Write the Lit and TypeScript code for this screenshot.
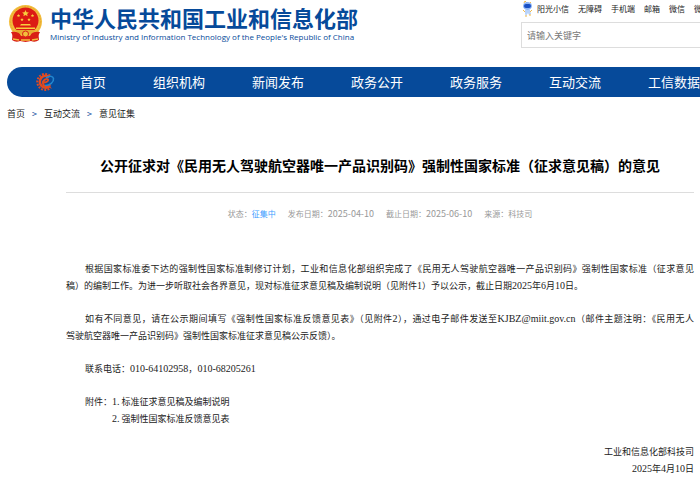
import { LitElement, html, css } from "lit";
import { customElement } from "lit/decorators.js";

const SANS = css`"Noto Sans CJK SC", "Noto Sans", sans-serif`;

@customElement("site-header")
class SiteHeader extends LitElement {
  static styles = css`
    :host { display: block; font-family: ${SANS}; }
    header { display: flex; height: 60px; }
    .brand { flex: 1; min-width: 0; display: flex; align-items: flex-start; padding: 4px 0 0 8px; gap: 7px; white-space: nowrap; }
    .emblem { flex: none; width: 35px; height: 39px; }
    .name { margin: 0; font-size: 22px; line-height: 26px; font-weight: 700; color: #064a9a; }
    .english { margin: 0; font: 400 8px/14px "Open Sans", sans-serif; color: #064a9a; }
    .tools { flex: none; width: 179px; overflow: hidden; white-space: nowrap; }
    .links { display: flex; align-items: center; gap: 9px; height: 18px; padding-left: 1px; }
    .links a { display: flex; align-items: center; gap: 4px; color: #222; text-decoration: none; font-size: 8px; line-height: 16px; }
    .mascot { width: 11px; height: 16px; }
    input { display: block; box-sizing: border-box; width: 240px; height: 26px; margin-top: 4px; padding: 0 5px; border: 1px solid #ddd; background: #fff; font: 9px/16px ${SANS}; color: #333; }
    input::placeholder { color: #777; opacity: 1; }
  `;
  render() {
    return html`
      <header>
        <div class="brand">
          <svg class="emblem" viewBox="0 0 35 39" aria-hidden="true">
            <path d="M5 25 L4 36 Q8 39 12 37 L17.500 38 L23 37 Q27 39 31 36 L30 25Z" fill="#d91f16" />
            <circle cx="17.500" cy="17.500" r="16.500" fill="#f3bd3c" />
            <circle cx="17.500" cy="17.500" r="15" fill="none" stroke="#e5a730" stroke-width="1" stroke-dasharray="2 1" />
            <circle cx="17.500" cy="16.500" r="13" fill="#dc1b14" />
            <path d="M17.500 6l1 2.200 2.400.2-1.800 1.600.5 2.300-2.100-1.200-2.100 1.200.5-2.300-1.800-1.600 2.400-.2z" fill="#f8cf3d" />
            <g fill="#f8cf3d">
              <path d="M10.500 10l.5 1 1.100.1-.8.8.2 1.100-1-.6-1 .6.2-1.100-.8-.8 1.100-.1z" />
              <path d="M24.500 10l.5 1 1.100.1-.8.8.2 1.100-1-.6-1 .6.2-1.100-.8-.8 1.100-.1z" />
              <path d="M14 14l.5 1 1.100.1-.8.8.2 1.100-1-.6-1 .6.2-1.100-.8-.8 1.100-.1z" />
              <path d="M21 14l.5 1 1.100.1-.8.8.2 1.100-1-.6-1 .6.2-1.100-.8-.8 1.100-.1z" />
              <path d="M13 20h9l1 1.500h-11zM8 23.500h19v1.500h-19z" />
            </g>
            <path d="M7 26h21l-4 4h-13z" fill="#e8ab32" />
            <path d="M3 28q8-1 10 4h9q2-5 10-4l-2 4q-5-1-6 3l-6.500 2-6.500-2q-1-4-6-3z" fill="#d91f16" />
            <circle cx="17.500" cy="30" r="3" fill="#f3bd3c" stroke="#d91f16" />
            <path d="M5 35l6 1M30 35l-6 1M13 36h9" stroke="#f3bd3c" stroke-width="1.500" />
          </svg>
          <div>
            <h1 class="name">中华人民共和国工业和信息化部</h1>
            <p class="english">Ministry of Industry and Information Technology of the People's Republic of China</p>
          </div>
        </div>
        <div class="tools">
          <nav class="links" aria-label="快捷入口">
            <a href="#">
              <svg class="mascot" viewBox="0 0 11 16" aria-hidden="true">
                <path d="M2 2l1-2 2 2M8 2l1-1" fill="none" stroke="#efb94b" />
                <ellipse cx="5.500" cy="5" rx="4.500" ry="4" fill="#8fb5f4" />
                <rect x="2" y="3" width="7" height="4" rx="2" fill="#194fc4" />
                <path d="M3 9h5l1 4-2 1-1-2-2 3-1-2z" fill="#b9d3fa" />
                <path d="M1 9l2 2M10 9l-2 2M3 15h2M7 14h2" stroke="#efb94b" />
              </svg>阳光小信</a>
            <a href="#">无障碍</a><a href="#">手机端</a><a href="#">邮箱</a><a href="#">微信</a><a href="#">微博</a>
          </nav>
          <input type="search" aria-label="搜索" placeholder="请输入关键字" />
        </div>
      </header>
    `;
  }
}

@customElement("site-nav")
class SiteNav extends LitElement {
  static styles = css`
    :host { display: block; font-family: ${SANS}; }
    .bar { display: flex; align-items: center; height: 30px; margin: 7px 0 0 7px; padding-left: 29px; border-radius: 15px 0 0 15px; background: #064a9a; overflow: hidden; white-space: nowrap; }
    .gear { flex: none; width: 19px; height: 20px; margin-right: 25px; }
    .items { display: flex; gap: 47px; }
    .items a { flex: none; color: #fff; text-decoration: none; font-size: 13px; line-height: 20px; }
    .crumbs { display: flex; gap: 7px; padding: 9px 0 0 7px; font-size: 9px; line-height: 16px; color: #064a9a; }
    .crumbs a { color: #222; text-decoration: none; }
  `;
  private items = ["首页", "组织机构", "新闻发布", "政务公开", "政务服务", "互动交流", "工信数据"];
  render() {
    return html`
      <nav class="bar" aria-label="主导航">
        <svg class="gear" viewBox="0 0 19 20" aria-hidden="true">
          <path d="M14 3.500A8 8 0 1 0 15 15.500" fill="none" stroke="#e34a20" stroke-width="2" stroke-dasharray="1.900 1.300" />
          <path d="M13.500 5A6 6 0 1 0 14 14" fill="none" stroke="#e34a20" stroke-width="2.600" />
          <path d="M6 10.500C10 11 13 9 12 7.500C11 6 6.500 8 7 11.500C7.500 15 12 15 14.500 12.500" fill="none" stroke="#e34a20" stroke-width="1.800" />
          <path d="M10 6C13 3 17 4 17.500 6.500C18 10 14 13.500 9 13.500" fill="none" stroke="#2387cf" stroke-width="1.500" />
        </svg>
        <div class="items">${this.items.map((t) => html`<a href="#">${t}</a>`)}</div>
      </nav>
      <nav class="crumbs" aria-label="当前位置">
        <a href="#">首页</a><span>&gt;</span><a href="#">互动交流</a><span>&gt;</span><a href="#">意见征集</a>
      </nav>
    `;
  }
}

@customElement("notice-article")
class NoticeArticle extends LitElement {
  static styles = css`
    :host { display: block; font-family: ${SANS}; }
    article { margin: 0 6px 0 66px; }
    h2 { margin: 0; padding: 33px 0 17px; border-bottom: 1px solid #ddd; text-align: center; font-size: 14px; line-height: 20px; font-weight: 700; color: #000; }
    .meta { display: flex; justify-content: center; gap: 12px; padding: 13px 0 38px; font-size: 8px; line-height: 16px; color: #999; }
    .meta b { font-weight: 400; color: #409eff; }
    time { font-size: 9px; }
    .body { display: flex; flex-direction: column; gap: 16px; font-size: 9px; line-height: 17px; color: #222; }
    p { margin: 0; }
    .line { display: block; }
    .indent { text-indent: 19px; }
    .full { text-align-last: justify; }
    .latin { font-family: "Liberation Serif", serif; font-size: 10px; line-height: 10px; }
    .files { display: flex; padding-left: 19px; }
    .sign { text-align: right; }
  `;
  render() {
    return html`
      <article>
        <h2>公开征求对《民用无人驾驶航空器唯一产品识别码》强制性国家标准（征求意见稿）的意见</h2>
        <div class="meta">
          <span>状态：<b>征集中</b></span>
          <span>发布日期：<time>2025-04-10</time></span>
          <span>截止日期：<time>2025-06-10</time></span>
          <span>来源：科技司</span>
        </div>
        <div class="body">
          <p>
            <span class="line indent full">根据国家标准委下达的强制性国家标准制修订计划，工业和信息化部组织完成了《民用无人驾驶航空器唯一产品识别码》强制性国家标准（征求意见</span>
            <span class="line">稿）的编制工作。为进一步听取社会各界意见，现对标准征求意见稿及编制说明（见附件<span class="latin">1</span>）予以公示，截止日期<span class="latin">2025</span>年<span class="latin">6</span>月<span class="latin">10</span>日。</span>
          </p>
          <p>
            <span class="line indent full">如有不同意见，请在公示期间填写《强制性国家标准反馈意见表》（见附件<span class="latin">2</span>），通过电子邮件发送至<span class="latin">KJBZ@miit.gov.cn</span>（邮件主题注明：《民用无人</span>
            <span class="line">驾驶航空器唯一产品识别码》强制性国家标准征求意见稿公示反馈）。</span>
          </p>
          <p class="indent">联系电话：<span class="latin">010-64102958</span>，<span class="latin">010-68205261</span></p>
          <div class="files">
            <span>附件：</span>
            <div>
              <p><span class="latin">1.</span> 标准征求意见稿及编制说明</p>
              <p><span class="latin">2.</span> 强制性国家标准反馈意见表</p>
            </div>
          </div>
          <div class="sign">
            <p>工业和信息化部科技司</p>
            <p><span class="latin">2025</span>年<span class="latin">4</span>月<span class="latin">10</span>日</p>
          </div>
        </div>
      </article>
    `;
  }
}

@customElement("app-root")
class AppRoot extends LitElement {
  static styles = css`
    :host { display: block; background: #fff; overflow: hidden; }
  `;
  render() {
    return html`<site-header></site-header><site-nav></site-nav><main><notice-article></notice-article></main>`;
  }
}
